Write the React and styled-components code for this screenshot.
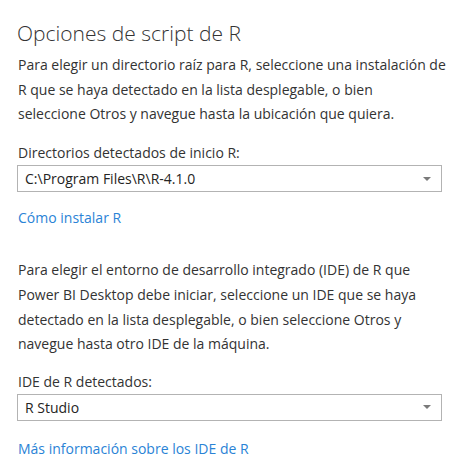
import * as React from "react";
import styled, { createGlobalStyle } from "styled-components";

const GlobalStyle = createGlobalStyle`
  body {
    margin: 0;
    background: #ffffff;
    font-family: "Segoe UI", "Open Sans", "Noto Sans", sans-serif;
    color: #333333;
  }
`;

const Page = styled.div`
  width: 476px;
  height: 467px;
  padding: 19px 34px 0 18px;
  box-sizing: border-box;
`;

const Title = styled.h2`
  margin: 0 0 0 -1px;
  font-size: 21px;
  font-weight: 300;
  line-height: 28px;
  color: #333333;
`;

const Paragraph = styled.p`
  margin: ${(p) => p.$top}px 0 0 0;
  font-size: 14px;
  line-height: 24.7px;
  color: #333333;
  white-space: nowrap;
`;

const Label = styled.div`
  margin-top: ${(p) => p.$top}px;
  font-size: 14px;
  line-height: 22px;
`;

const Select = styled.div`
  display: flex;
  align-items: center;
  justify-content: space-between;
  margin-top: 1px;
  margin-left: -1px;
  height: 27px;
  box-sizing: border-box;
  border: 1px solid #b3b3b3;
  padding: 0 10px 0 7px;
  font-size: 14px;
  color: #252423;
`;

const Arrow = styled.span`
  width: 0;
  height: 0;
  border-left: 4px solid transparent;
  border-right: 4px solid transparent;
  border-top: 4px solid #7a7a7a;
`;

const HelpLink = styled.a`
  display: block;
  margin-top: ${(p) => p.$top}px;
  font-size: 14px;
  line-height: 20px;
  color: #2a83d6;
  text-decoration: none;
`;

export default function App() {
  return (
    <Page>
      <GlobalStyle />
      <Title>Opciones de script de R</Title>
      <Paragraph $top={6}>
        Para elegir un directorio raíz para R, seleccione una instalación de
        <br />
        R que se haya detectado en la lista desplegable, o bien
        <br />
        seleccione Otros y navegue hasta la ubicación que quiera.
      </Paragraph>
      <Label $top={15}>Directorios detectados de inicio R:</Label>
      <Select>
        <span>C:\Program Files\R\R-4.1.0</span>
        <Arrow />
      </Select>
      <HelpLink $top={16}>Cómo instalar R</HelpLink>
      <Paragraph $top={30}>
        Para elegir el entorno de desarrollo integrado (IDE) de R que
        <br />
        Power BI Desktop debe iniciar, seleccione un IDE que se haya
        <br />
        detectado en la lista desplegable, o bien seleccione Otros y
        <br />
        navegue hasta otro IDE de la máquina.
      </Paragraph>
      <Label $top={14}>IDE de R detectados:</Label>
      <Select>
        <span>R Studio</span>
        <Arrow />
      </Select>
      <HelpLink $top={18}>Más información sobre los IDE de R</HelpLink>
    </Page>
  );
}
